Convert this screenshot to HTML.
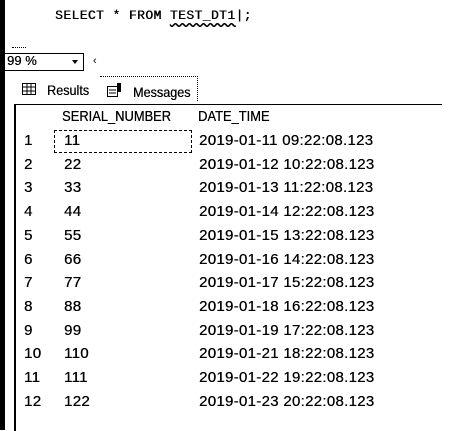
<!DOCTYPE html><html><head><style>
body{margin:0;width:450px;height:430px;background:#fff;position:relative;overflow:hidden;font-family:"Liberation Sans",sans-serif;color:#000}
.a{position:absolute}
.r{position:absolute;font-size:15px;white-space:nowrap;letter-spacing:0.3px;text-shadow:0.3px 0 0 #000}
</style></head><body>
<div class="a" style="left:0;top:0;width:5px;height:430px;background:#000"></div>
<div class="a" style="left:55px;top:8px;font-family:'Liberation Mono',monospace;font-size:13px;letter-spacing:0.4px;text-shadow:0.4px 0 0 #000">SELECT * FROM <span style="text-decoration:underline wavy #000;text-underline-offset:3px">TEST_DT1</span>|;</div>
<div class="a" style="left:5px;top:53px;width:78px;height:16px;border:1px solid #000;border-left:none"></div>
<div class="a" style="left:12px;top:47px;width:14px;border-top:1px dotted #000"></div>
<div class="r" style="left:7px;top:53px;font-size:13px;letter-spacing:0">99 %</div>
<div class="a" style="left:72px;top:60px;width:0;height:0;border:3px solid transparent;border-top:4px solid #000"></div>
<div class="a" style="left:93px;top:55px;font-size:11px">‹</div>
<div class="a" style="left:100px;top:76px;width:97px;height:24px;border-top:1px dotted #000;border-right:1px dotted #000"></div>
<svg class="a" style="left:22px;top:83px" width="14" height="12"><rect x="0.5" y="0.5" width="13" height="11" fill="none" stroke="#000"/><path d="M0 4H14M0 8H14M5 0V12M9 0V12" stroke="#000"/></svg>
<div class="r" style="left:47px;top:82px;font-size:14px;letter-spacing:0;transform:scaleX(0.9);transform-origin:left">Results</div>
<svg class="a" style="left:107px;top:82px" width="16" height="15"><rect x="0.5" y="4.5" width="10" height="10" fill="none" stroke="#000"/><path d="M2 8H9M2 11H9" stroke="#000"/><rect x="10" y="1" width="4" height="9" fill="#000"/></svg>
<div class="r" style="left:133px;top:84px;font-size:14px;letter-spacing:0;transform:scaleX(0.9);transform-origin:left">Messages</div>
<div class="a" style="left:14px;top:104px;width:426px;height:326px;border-top:1px solid #000;border-left:2px solid #000"></div>
<div class="r" style="left:62px;top:108px;letter-spacing:0;transform:scaleX(0.86);transform-origin:left">SERIAL_NUMBER</div>
<div class="r" style="left:198px;top:108px;letter-spacing:0;transform:scaleX(0.86);transform-origin:left">DATE_TIME</div>
<div class="a" style="left:54px;top:130px;width:136px;height:21px;border:1px dashed #000"></div>
<div id="rows"></div>
<script>
var d=[["1","11","2019-01-11 09:22:08.123"],["2","22","2019-01-12 10:22:08.123"],["3","33","2019-01-13 11:22:08.123"],["4","44","2019-01-14 12:22:08.123"],["5","55","2019-01-15 13:22:08.123"],["6","66","2019-01-16 14:22:08.123"],["7","77","2019-01-17 15:22:08.123"],["8","88","2019-01-18 16:22:08.123"],["9","99","2019-01-19 17:22:08.123"],["10","110","2019-01-21 18:22:08.123"],["11","111","2019-01-22 19:22:08.123"],["12","122","2019-01-23 20:22:08.123"]];
var h="";d.forEach(function(r,i){var t=132+i*23.7;h+='<div class="r" style="left:24px;top:'+t+'px">'+r[0]+'</div><div class="r" style="left:64px;top:'+t+'px">'+r[1]+'</div><div class="r" style="left:199px;top:'+t+'px">'+r[2]+'</div>';});
document.getElementById("rows").innerHTML=h;
</script>
</body></html>
